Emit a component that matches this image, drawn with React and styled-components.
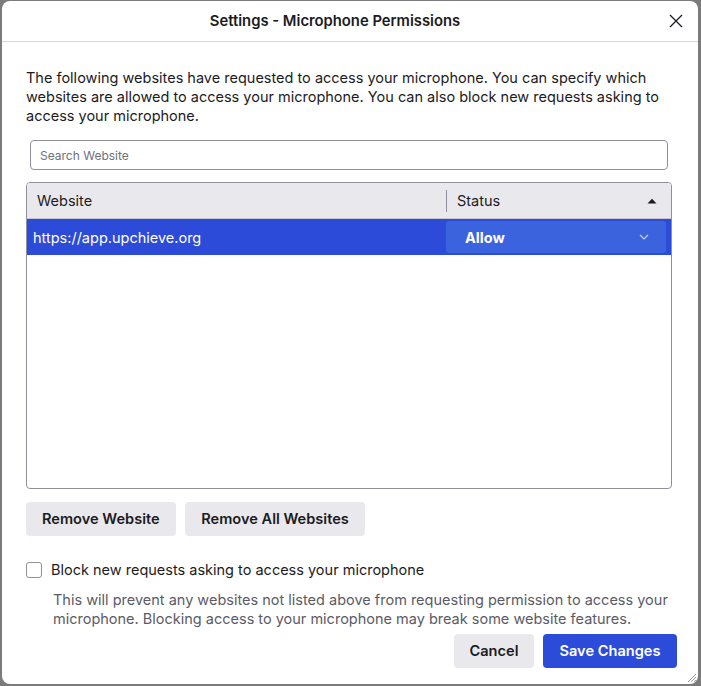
import React, { useState } from 'react';
import styled, { createGlobalStyle } from 'styled-components';

const GlobalStyle = createGlobalStyle`
  html, body {
    margin: 0;
    padding: 0;
    background: #7b7b7b;
  }
  body {
    font-family: Inter, "Liberation Sans", sans-serif;
    color: #1c1b22;
  }
`;

const Backdrop = styled.div`
  width: 701px;
  height: 686px;
  padding: 1px 3px 2px 2px;
  box-sizing: border-box;
`;

const Dialog = styled.div`
  position: relative;
  height: 100%;
  background: #fff;
  border-radius: 8px;
  display: flex;
  flex-direction: column;
  overflow: hidden;
`;

const Header = styled.div`
  height: 40px;
  flex-shrink: 0;
  display: flex;
  align-items: center;
  justify-content: center;
  padding-right: 30px;
  border-bottom: 1px solid #d7d7db;
  position: relative;
`;

const Title = styled.h1`
  margin: 0;
  font-size: 14.8px;
  font-weight: 600;
`;

const CloseButton = styled.button`
  position: absolute;
  right: 12px;
  top: 10px;
  width: 20px;
  height: 20px;
  border: none;
  background: none;
  padding: 0;
  display: flex;
  align-items: center;
  justify-content: center;
  color: #1c1b22;
`;

const Body = styled.div`
  flex: 1;
  display: flex;
  flex-direction: column;
  padding: 26px 26px 0 24px;
`;

const Intro = styled.p`
  margin: 0;
  font-size: 14.5px;
  line-height: 19px;
`;

const Search = styled.input`
  margin: 15px 4px 0 4px;
  height: 30px;
  box-sizing: border-box;
  border: 1px solid #8f8f9d;
  border-radius: 4px;
  padding: 0 9px;
  font-family: inherit;
  font-size: 12px;
  color: #1c1b22;
  &::placeholder {
    color: #6f6f78;
  }
`;

const Table = styled.div`
  margin-top: 12px;
  height: 307px;
  border: 1px solid #8f8f9d;
  border-radius: 4px;
  overflow: hidden;
  box-sizing: border-box;
`;

const HeadRow = styled.div`
  display: grid;
  grid-template-columns: 419px 1fr;
  height: 35px;
  background: #e9e9ed;
  border-bottom: 1px solid #c8c8cc;
  font-size: 14.5px;
  align-items: center;
`;

const HeadCell = styled.div`
  padding-left: 10px;
  display: flex;
  align-items: center;
  height: 22px;
  border-left: ${p => (p.$divider ? '1px solid #8f8f9d' : 'none')};
  justify-content: space-between;
  padding-right: ${p => (p.$divider ? '14px' : '0')};
`;

const Row = styled.div`
  display: grid;
  grid-template-columns: 419px 1fr;
  height: 36px;
  align-items: center;
  background: ${p => (p.$selected ? '#2c4bd8' : 'transparent')};
  color: ${p => (p.$selected ? '#fff' : '#1c1b22')};
  font-size: 14.5px;
`;

const SiteCell = styled.div`
  padding-left: 6px;
`;

const StatusSelect = styled.div`
  margin-right: 5px;
  height: 32px;
  border-radius: 3px;
  background: #3a63dd;
  display: flex;
  align-items: center;
  justify-content: space-between;
  padding: 0 17px 0 19px;
  font-weight: 700;
`;

const ButtonRow = styled.div`
  display: flex;
  gap: 9px;
  margin-top: 13px;
`;

const Button = styled.button`
  height: 34px;
  border: none;
  border-radius: 4px;
  padding: 0 ${p => p.$pad || 16}px;
  font-family: inherit;
  font-size: 14.6px;
  font-weight: 600;
  background: ${p => (p.$primary ? '#2c4bd8' : '#e9e9ed')};
  color: ${p => (p.$primary ? '#fff' : '#1c1b22')};
`;

const CheckRow = styled.label`
  display: flex;
  align-items: center;
  gap: 9px;
  margin-top: 25px;
  font-size: 14.5px;
`;

const Box = styled.span`
  width: 14px;
  height: 14px;
  border: 1px solid #8f8f9d;
  border-radius: 3px;
  flex-shrink: 0;
`;

const Note = styled.p`
  margin: 12px 0 0 27px;
  font-size: 14.5px;
  line-height: 19px;
  color: #5b5b66;
`;

const Footer = styled.div`
  display: flex;
  justify-content: flex-end;
  gap: 9px;
  margin-top: 6px;
  margin-right: -5px;
`;

const Grip = styled.svg`
  position: absolute;
  right: 1px;
  bottom: 1px;
`;

const TriangleUp = () => (
  <svg width="10" height="6" viewBox="0 0 10 6">
    <path d="M0.5 5.5 L5 0.8 L9.5 5.5 Z" fill="#1c1b22" />
  </svg>
);

const Chevron = () => (
  <svg width="10" height="6" viewBox="0 0 10 6">
    <path d="M1 1 L5 5 L9 1" fill="none" stroke="#c8d2f5" strokeWidth="1.2" />
  </svg>
);

export default function App() {
  const [blocked] = useState(false);
  return (
    <Backdrop>
      <GlobalStyle />
      <Dialog>
        <Header>
          <Title>Settings - Microphone Permissions</Title>
          <CloseButton aria-label="Close">
            <svg width="14" height="14" viewBox="0 0 14 14">
              <path d="M1 1 L13 13 M13 1 L1 13" stroke="#1c1b22" strokeWidth="1.3" />
            </svg>
          </CloseButton>
        </Header>
        <Body>
          <Intro>
            The following websites have requested to access your microphone. You can specify which
            websites are allowed to access your microphone. You can also block new requests asking to
            access your microphone.
          </Intro>
          <Search placeholder="Search Website" />
          <Table>
            <HeadRow>
              <HeadCell>Website</HeadCell>
              <HeadCell $divider>
                Status
                <TriangleUp />
              </HeadCell>
            </HeadRow>
            <Row $selected>
              <SiteCell>https://app.upchieve.org</SiteCell>
              <StatusSelect>
                Allow
                <Chevron />
              </StatusSelect>
            </Row>
          </Table>
          <ButtonRow>
            <Button $pad={16}>Remove Website</Button>
            <Button $pad={16.5}>Remove All Websites</Button>
          </ButtonRow>
          <CheckRow>
            <Box aria-checked={blocked} />
            Block new requests asking to access your microphone
          </CheckRow>
          <Note>
            This will prevent any websites not listed above from requesting permission to access your
            microphone. Blocking access to your microphone may break some website features.
          </Note>
          <Footer>
            <Button $pad={15.5}>Cancel</Button>
            <Button $primary $pad={16.5}>Save Changes</Button>
          </Footer>
        </Body>
        <Grip width="12" height="12" viewBox="0 0 12 12">
          <path d="M11 3 L3 11 M11 6 L6 11 M11 9 L9 11" stroke="#9a9a9a" strokeWidth="1" />
        </Grip>
      </Dialog>
    </Backdrop>
  );
}
